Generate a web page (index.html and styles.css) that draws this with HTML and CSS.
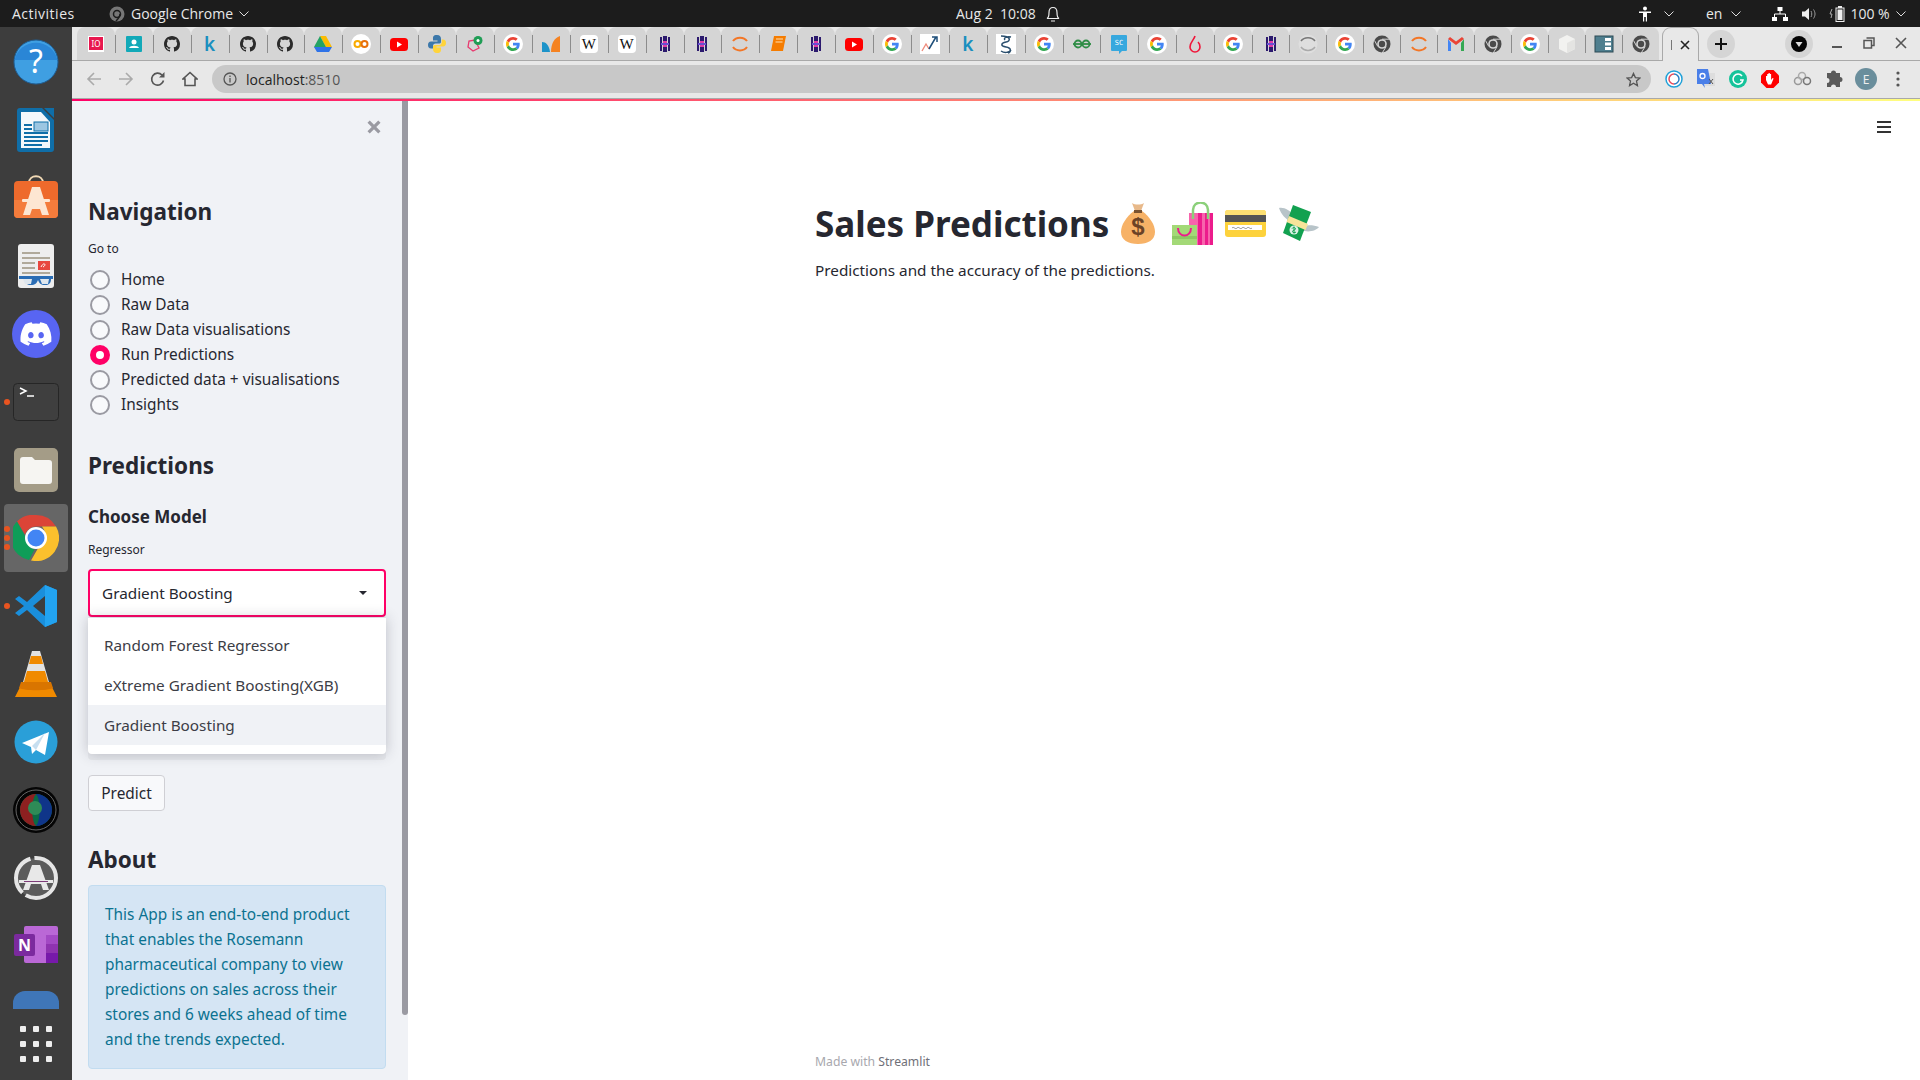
FILE: index.html
```html
<!DOCTYPE html>
<html lang="en">
<head>
    <meta charset="UTF-8">
    <title>Sales Predictions</title>
    <link rel="stylesheet" href="styles.css">
</head>
<body>
    <!-- shared favicons -->
    <svg class="defs" width="0" height="0">
        <symbol id="i-github" viewBox="0 0 20 20"><path transform="translate(2 2)" fill="#2b2b2b" d="M8 0C3.58 0 0 3.58 0 8c0 3.54 2.29 6.53 5.47 7.59.4.07.55-.17.55-.38 0-.19-.01-.82-.01-1.49-2.01.37-2.53-.49-2.69-.94-.09-.23-.48-.94-.82-1.13-.28-.15-.68-.52-.01-.53.63-.01 1.08.58 1.23.82.72 1.21 1.87.87 2.33.66.07-.52.28-.87.51-1.07-1.78-.2-3.64-.89-3.64-3.95 0-.87.31-1.59.82-2.15-.08-.2-.36-1.02.08-2.12 0 0 .67-.21 2.2.82.64-.18 1.32-.27 2-.27.68 0 1.36.09 2 .27 1.53-1.04 2.2-.82 2.2-.82.44 1.1.16 1.92.08 2.12.51.56.82 1.27.82 2.15 0 3.07-1.87 3.75-3.65 3.95.29.25.54.73.54 1.48 0 1.07-.01 1.93-.01 2.2 0 .21.15.46.55.38A8.013 8.013 0 0016 8c0-4.42-3.58-8-8-8z"/></symbol>
        <symbol id="i-google" viewBox="0 0 20 20"><circle cx="10" cy="10" r="10" fill="#fff"/><g transform="translate(3 3) scale(.292)"><path fill="#EA4335" d="M24 9.5c3.54 0 6.71 1.22 9.21 3.6l6.85-6.85C35.9 2.38 30.47 0 24 0 14.62 0 6.51 5.38 2.56 13.22l7.98 6.19C12.43 13.72 17.74 9.5 24 9.5z"/><path fill="#4285F4" d="M46.98 24.55c0-1.57-.15-3.09-.38-4.55H24v9.02h12.94c-.58 2.96-2.26 5.48-4.78 7.18l7.73 6c4.51-4.18 7.09-10.36 7.09-17.65z"/><path fill="#FBBC05" d="M10.53 28.59c-.48-1.45-.76-2.99-.76-4.59s.27-3.14.76-4.59l-7.98-6.19C.92 16.46 0 20.12 0 24c0 3.88.92 7.54 2.56 10.78l7.97-6.19z"/><path fill="#34A853" d="M24 48c6.48 0 11.93-2.13 15.89-5.81l-7.73-6c-2.15 1.45-4.92 2.3-8.16 2.3-6.26 0-11.57-4.22-13.47-9.91l-7.98 6.19C6.51 42.62 14.62 48 24 48z"/></g></symbol>
        <symbol id="i-youtube" viewBox="0 0 20 20"><rect x="1" y="4" width="18" height="13" rx="3.5" fill="#f00"/><path d="M8 7.5l5 3-5 3z" fill="#fff"/></symbol>
        <symbol id="i-hack" viewBox="0 0 20 20"><path d="M6 3v14M9 2v16M11 2v16M14 3v14" stroke="#2c1a6e" stroke-width="2" fill="none"/><rect x="8" y="7" width="4" height="6" fill="#e23aa8"/><rect x="6" y="9" width="8" height="2" fill="#6a4fd0"/></symbol>
        <symbol id="i-arcs" viewBox="0 0 20 20"><path d="M3 7c3-4.500 11-4.500 14 0" stroke="#f37626" stroke-width="2" fill="none"/><path d="M3 13c3 4.500 11 4.500 14 0" stroke="#f37626" stroke-width="2" fill="none"/></symbol>
        <symbol id="i-arcs-grey" viewBox="0 0 20 20"><circle cx="10" cy="10" r="9.500" fill="#dedede"/><path d="M3 7c3-4.500 11-4.500 14 0" stroke="#777" stroke-width="1.500" fill="none"/><path d="M3 13c3 4.500 11 4.500 14 0" stroke="#aaa" stroke-width="1.500" fill="none"/></symbol>
        <symbol id="i-chrome-grey" viewBox="0 0 20 20"><circle cx="10" cy="10" r="8.500" fill="#4a4a4a"/><circle cx="10" cy="10" r="4.800" fill="#d5d5d5"/><circle cx="10" cy="10" r="3.200" fill="#4a4a4a"/><path d="M10 5.200h7.500M5.800 12.500L2.500 6.500M14.200 12.500l-4 6.500" stroke="#d5d5d5" stroke-width="1" fill="none"/></symbol>
    </svg>

    <header class="topbar">
        <div class="top-left">
            <span class="activities">Activities</span>
            <svg class="app-dot" width="16" height="16" viewBox="0 0 16 16"><circle cx="8" cy="8" r="7.500" fill="#777"/><circle cx="8" cy="8" r="3.500" fill="none" stroke="#1c1c1c" stroke-width="1.500"/><path d="M11 8c0 3-2 5-4 7" stroke="#1c1c1c" stroke-width="1.500" fill="none"/></svg>
            <span>Google Chrome</span>
            <svg class="caret" width="10" height="6" viewBox="0 0 10 6"><path d="M.5.5L5 5 9.500.5" fill="none" stroke="#ddd"/></svg>
        </div>
        <div class="top-clock">
            <span>Aug 2&nbsp; 10:08</span>
            <svg width="14" height="16" viewBox="0 0 14 16"><path d="M1 12.500c2-1 2-3 2-6 0-3 1.500-5 4-5s4 2 4 5c0 3 0 5 2 6z" fill="none" stroke="#eee" stroke-width="1.200"/><path d="M5 15h4" stroke="#eee"/></svg>
        </div>
        <div class="top-right">
            <svg width="14" height="16" viewBox="0 0 14 16"><circle cx="7" cy="2.500" r="2" fill="#fff"/><path d="M1 5.500h12v1.500H9v8.500H7.800V11H6.200v4.500H5V7H1z" fill="#fff"/></svg>
            <svg class="caret caret-a" width="10" height="6" viewBox="0 0 10 6"><path d="M.5.5L5 5 9.500.5" fill="none" stroke="#ddd"/></svg>
            <span class="lang">en</span>
            <svg class="caret caret-b" width="10" height="6" viewBox="0 0 10 6"><path d="M.5.5L5 5 9.500.5" fill="none" stroke="#ddd"/></svg>
            <svg class="net" width="16" height="14" viewBox="0 0 16 14"><path d="M5.500 0h5v4h-5zM0 10h5v4H0zM11 10h5v4h-5z" fill="#fff"/><path d="M8 4v3M2.500 10V7h11v3" stroke="#fff" fill="none"/></svg>
            <svg class="vol" width="15" height="14" viewBox="0 0 15 14"><path d="M0 4.500h3L7 1v12l-4-3.500H0z" fill="#eee"/><path d="M9 4c1 1.500 1 4.500 0 6M11.500 2.500c2 3 2 6 0 9" stroke="#999" fill="none"/></svg>
            <svg class="batt" width="18" height="16" viewBox="0 0 18 16"><path d="M3 3L1 8h2l-1 4" stroke="#aaa" fill="none"/><rect x="7" y="2" width="8" height="13.500" fill="none" stroke="#eee"/><rect x="9" y="0" width="4" height="2" fill="#eee"/><rect x="8.500" y="3.500" width="5" height="10.500" fill="#eee"/></svg>
            <span class="pct">100 %</span>
            <svg class="caret caret-c" width="10" height="6" viewBox="0 0 10 6"><path d="M.5.5L5 5 9.500.5" fill="none" stroke="#ddd"/></svg>
        </div>
    </header>

    <div class="desktop">
        <nav class="dock">
            <div class="dock-list">
                <div class="dock-item"><svg width="46" height="46" viewBox="0 0 46 46"><circle cx="23" cy="23" r="22" fill="#3f9fe2" stroke="#1f5f96"/><path d="M1.500 21a22 22 0 0 1 43 0z" fill="#2a86d6"/><text x="23" y="34" text-anchor="middle" font-family="Noto Sans" font-size="32" fill="#fff">?</text></svg></div>
                <div class="dock-item"><svg width="38" height="46" viewBox="0 0 38 46"><path d="M3 1h22l12 12v29a3 3 0 0 1-3 3H3a3 3 0 0 1-3-3V4a3 3 0 0 1 3-3z" fill="#0f6ea8"/><path d="M4 5h20l9 10v26H4z" fill="#f4f8fb"/><path d="M27 1h10v10z" fill="#0f6ea8"/><path d="M7 17h8v2H7zM7 21h8v2H7zM7 25h24v2H7zM7 29h24v2H7zM7 33h24v2H7zM7 37h18v2H7z" fill="#0f6ea8"/><rect x="17" y="15" width="14" height="9" fill="#9cc6e2" stroke="#0f6ea8"/></svg></div>
                <div class="dock-item bag"><svg width="46" height="46" viewBox="0 0 46 46"><path d="M16 9c0-9 14-9 14 0" fill="none" stroke="#f1d9b5" stroke-width="2"/><rect x="1" y="7" width="44" height="37" rx="4" fill="#ee6a2c"/><path d="M1 26h44v14a4 4 0 0 1-4 4H5a4 4 0 0 1-4-4z" fill="#f47c3c"/><path d="M19 13h8l9 28h-7l-2-6h-8l-2 6h-7z" fill="#fde6d2"/><rect x="9" y="25" width="28" height="3" rx="1" fill="#fde6d2"/></svg></div>
                <div class="dock-item"><svg width="38" height="46" viewBox="0 0 38 46"><rect width="36" height="44" x="1" y="1" rx="3" fill="#eee"/><path d="M5 9h18v2H5zM5 14h28v2H5zM5 19h13v2H5zM5 24h13v2H5zM5 29h28v2H5z" fill="#b0a99a"/><rect x="21" y="18" width="12" height="9" fill="#e8473f"/><path d="M24 24c3-6 6-2 2 0" stroke="#fff" fill="none"/><path d="M2 33h34v3h-2c0 4-2 6-6 6s-6-2-7-5c-1 3-3 5-7 5s-6-2-6-6H2z" fill="#2a6db5"/><path d="M6 36h9l-1 5H8zM23 36h9l-1 5h-6z" fill="#dfe7ee"/></svg></div>
                <div class="dock-item"><svg width="48" height="48" viewBox="0 0 48 48"><circle cx="24" cy="24" r="24" fill="#5865f2"/><path transform="translate(8.500 8.500) scale(1.290)" fill="#fff" d="M20.317 4.37a19.791 19.791 0 0 0-4.885-1.515.074.074 0 0 0-.079.037c-.21.375-.444.864-.608 1.25a18.27 18.27 0 0 0-5.487 0 12.64 12.64 0 0 0-.617-1.25.077.077 0 0 0-.079-.037A19.736 19.736 0 0 0 3.677 4.37a.07.07 0 0 0-.032.027C.533 9.046-.32 13.58.099 18.057a.082.082 0 0 0 .031.057 19.9 19.9 0 0 0 5.993 3.03.078.078 0 0 0 .084-.028 14.09 14.09 0 0 0 1.226-1.994.076.076 0 0 0-.041-.106 13.107 13.107 0 0 1-1.872-.892.077.077 0 0 1-.008-.128 10.2 10.2 0 0 0 .372-.292.074.074 0 0 1 .077-.01c3.928 1.793 8.18 1.793 12.062 0a.074.074 0 0 1 .078.01c.12.098.246.198.373.292a.077.077 0 0 1-.006.127 12.299 12.299 0 0 1-1.873.892.077.077 0 0 0-.041.107c.36.698.772 1.362 1.225 1.993a.076.076 0 0 0 .084.028 19.839 19.839 0 0 0 6.002-3.03.077.077 0 0 0 .032-.054c.5-5.177-.838-9.674-3.549-13.66a.061.061 0 0 0-.031-.03zM8.02 15.33c-1.183 0-2.157-1.085-2.157-2.419 0-1.333.956-2.419 2.157-2.419 1.21 0 2.176 1.096 2.157 2.42 0 1.333-.956 2.418-2.157 2.418zm7.975 0c-1.183 0-2.157-1.085-2.157-2.419 0-1.333.955-2.419 2.157-2.419 1.21 0 2.176 1.096 2.157 2.42 0 1.333-.946 2.418-2.157 2.418z"/></svg></div>
                <div class="dock-item"><span class="run-dot one"></span><svg width="46" height="38" viewBox="0 0 46 38"><rect x=".5" y=".5" width="45" height="37" rx="4" fill="#3f3f3f" stroke="#262626"/><path d="M7 5l6 3-6 3M14 13h7" stroke="#fff" stroke-width="1.500" fill="none"/></svg></div>
                <div class="dock-item"><svg width="46" height="44" viewBox="0 0 46 44"><rect width="44" height="44" x="1" rx="5" fill="#a49c87"/><path d="M7 12a3 3 0 0 1 3-3h9l3 3h14a3 3 0 0 1 3 3v18a3 3 0 0 1-3 3H10a3 3 0 0 1-3-3z" fill="#f6f5f2"/></svg></div>
                <div class="dock-item active"><span class="run-dots"><i></i><i></i><i></i></span><svg width="46" height="46" viewBox="0 0 46 46"><path d="M23 0a23 23 0 0 1 20 11.500H23a11.500 11.500 0 0 0-11 8L4 6.500A23 23 0 0 1 23 0z" fill="#db4437"/><path d="M4 6.500l9.500 17a11.500 11.500 0 0 0 8 11L16 45A23 23 0 0 1 4 6.500z" fill="#0f9d58"/><path d="M43 11.500A23 23 0 0 1 18 45.500l10-17.500a11.500 11.500 0 0 0 1-16.500z" fill="#fbc02d"/><circle cx="23" cy="23" r="11" fill="#fff"/><circle cx="23" cy="23" r="8.500" fill="#4285f4"/></svg></div>
                <div class="dock-item"><span class="run-dot"></span><svg width="44" height="42" viewBox="0 0 44 42"><path d="M31 0l12 5v32l-12 5-18-17-8 6-4-3 9-7-9-7 4-3 8 6z" fill="#1a8fdc"/><path d="M31 0l12 5v32l-12 5z" fill="#22a3f0"/><path d="M31 11L19 21l12 10z" fill="#3d3d3d"/></svg></div>
                <div class="dock-item"><svg width="42" height="46" viewBox="0 0 42 46"><path d="M17 0h8l11 38H6z" fill="#e2e2e2"/><path d="M16 5h10l2 8H14zM12 20h18l3 11H9z" fill="#f08a00"/><path d="M7 32l-7 14h42l-7-14c-2 5-26 5-28 0z" fill="#f08a00"/><path d="M6 31h30l2 6c-6 3-28 3-34 0z" fill="#d97500"/></svg></div>
                <div class="dock-item"><svg width="44" height="44" viewBox="0 0 44 44"><circle cx="22" cy="22" r="21.500" fill="#2a9fd8"/><path d="M8 23l27-11-4 23-9-5-4 4-1-7z" fill="#fff"/><path d="M18 26l13-13-9 17z" fill="#c7dff0"/></svg></div>
                <div class="dock-item"><svg width="46" height="46" viewBox="0 0 46 46"><circle cx="23" cy="23" r="23" fill="#050505"/><circle cx="23" cy="23" r="20" fill="none" stroke="#666" stroke-width="1"/><circle cx="23" cy="23" r="16" fill="#0a6a46"/><path d="M23 7a16 16 0 0 0 0 32c-5-5-5-27 0-32z" fill="#8d2020"/><path d="M23 7a16 16 0 0 1 0 32c5-5 5-27 0-32z" fill="#10289a" opacity=".8"/><circle cx="22" cy="21" r="7" fill="#2e8b57"/></svg></div>
                <div class="dock-item"><svg width="46" height="46" viewBox="0 0 46 46"><circle cx="23" cy="23" r="20" fill="#5c5c5c" stroke="#e6e6e6" stroke-width="4" stroke-dasharray="42 4"/><path d="M19 10h8l9 25h-6l-2-6H18l-2 6h-6z" fill="#e8e8e8"/><rect x="6" y="25" width="34" height="3" fill="#e8e8e8"/><rect x="11" y="26" width="24" height="1" fill="#7d3c78"/></svg></div>
                <div class="dock-item"><svg width="44" height="40" viewBox="0 0 44 40"><rect x="10" y="0" width="34" height="37" rx="2" fill="#ba68d6"/><rect x="32" y="9" width="12" height="9" fill="#a349c4"/><rect x="32" y="18" width="12" height="9" fill="#8f33b0"/><rect x="32" y="27" width="12" height="10" fill="#7719aa"/><rect x="0" y="8" width="21" height="22" rx="2" fill="#7b2a9e"/><text x="10.500" y="25" text-anchor="middle" font-family="Noto Sans" font-size="16" font-weight="700" fill="#fff">N</text></svg></div>
                <div class="dock-item"><svg width="46" height="46" viewBox="0 0 46 46"><rect width="46" height="46" x="0" y="0" rx="12" fill="#3f76b8"/></svg></div>
            </div>
            <div class="apps-grid"><i></i><i></i><i></i><i></i><i></i><i></i><i></i><i></i><i></i></div>
        </nav>

        <div class="browser">
            <div class="tabstrip">
                <div class="tabs">
                    <div class="tab"><svg width="20" height="20" viewBox="0 0 20 20"><rect x="2" y="2" width="16" height="16" fill="#fff"/><rect x="3" y="3" width="14" height="13" fill="#e8174f"/><text x="10" y="13" text-anchor="middle" font-family="Noto Sans" font-size="8" fill="#fff">IO</text></svg></div>
                    <div class="tab"><svg width="20" height="20" viewBox="0 0 20 20"><rect x="2" y="2" width="16" height="16" rx="1" fill="#12a9b8"/><circle cx="10" cy="8" r="2.500" fill="#fff"/><path d="M5 14c1-3 9-3 10 0z" fill="#fff"/></svg></div>
                    <div class="tab"><svg><use href="#i-github"/></svg></div>
                    <div class="tab"><span class="tab-k">k</span></div>
                    <div class="tab"><svg><use href="#i-github"/></svg></div>
                    <div class="tab"><svg><use href="#i-github"/></svg></div>
                    <div class="tab"><svg width="20" height="20" viewBox="0 0 20 20"><path d="M7 2h6l6 11h-6z" fill="#fbbc04"/><path d="M7 2l6 11-3 5-9-5z" fill="#0f9d58" opacity=".9"/><path d="M1 13h18l-3 5H4z" fill="#2f73e8"/></svg></div>
                    <div class="tab"><svg width="20" height="20" viewBox="0 0 20 20"><circle cx="10" cy="10" r="10" fill="#fff"/><circle cx="6.500" cy="10" r="3" fill="none" stroke="#f9ab00" stroke-width="2"/><circle cx="13.500" cy="10" r="3" fill="none" stroke="#e8710a" stroke-width="2"/></svg></div>
                    <div class="tab"><svg><use href="#i-youtube"/></svg></div>
                    <div class="tab"><svg width="20" height="20" viewBox="0 0 20 20"><path d="M10 1C6 1 6 3 6 5v1.500h4.500V7.500H4C2 7.500 1 9 1 11s1 3.500 3 3.500h2V12c0-1.500 1-2.500 2.500-2.500h4C14 9.500 14 8 14 7V5c0-2-1-4-4-4z" fill="#3c78aa"/><path d="M10 19c4 0 4-2 4-4v-1.500H9.500v-1H16c2 0 3-1.500 3-3.500s-1-3.500-3-3.500h-1.200V8c0 1.500-1 3-2.500 3h-4.500C6.500 11 6 12 6 13v2c0 2 1 4 4 4z" fill="#ffd43b"/></svg></div>
                    <div class="tab"><svg width="20" height="20" viewBox="0 0 20 20"><path d="M4 7l-1 6 5 4 6-3-4-8z" fill="none" stroke="#e8396f" stroke-width="1.300"/><circle cx="13" cy="6.500" r="4.500" fill="#1f9d55"/><circle cx="13" cy="6.500" r="1.500" fill="#fff"/></svg></div>
                    <div class="tab"><svg><use href="#i-google"/></svg></div>
                    <div class="tab"><svg width="20" height="20" viewBox="0 0 20 20"><path d="M1 8c4 0 7 3 8 10H1z" fill="#1d93c9"/><path d="M10 18c0-8 3-14 9-16v16z" fill="#f58220"/></svg></div>
                    <div class="tab"><span class="tab-w">W</span></div>
                    <div class="tab"><span class="tab-w">W</span></div>
                    <div class="tab"><svg><use href="#i-hack"/></svg></div>
                    <div class="tab"><svg><use href="#i-hack"/></svg></div>
                    <div class="tab"><svg><use href="#i-arcs"/></svg></div>
                    <div class="tab"><svg width="20" height="20" viewBox="0 0 20 20"><path d="M6 2h12l-3 15H3z" fill="#f57c00"/><path d="M8 5h7M7.500 8h7" stroke="#ffe0b2"/></svg></div>
                    <div class="tab"><svg><use href="#i-hack"/></svg></div>
                    <div class="tab"><svg><use href="#i-youtube"/></svg></div>
                    <div class="tab"><svg><use href="#i-google"/></svg></div>
                    <div class="tab"><svg width="20" height="20" viewBox="0 0 20 20"><rect width="20" height="20" fill="#fff"/><path d="M2 17l4-7 3 5" fill="none" stroke="#ef8a7a" stroke-width="1.300"/><path d="M9 15l7-12M12 3h5v5" fill="none" stroke="#1f4f7a" stroke-width="1.500"/></svg></div>
                    <div class="tab"><span class="tab-k">k</span></div>
                    <div class="tab"><svg width="20" height="20" viewBox="0 0 20 20"><rect width="20" height="20" fill="#fff"/><path d="M5 2c10 0 10 5 5 6s-6 4 0 5 5 5 2 6M15 3c-4-1-8 1-6 3M5 17c3 2 8 2 10-1" fill="none" stroke="#2b4f6e" stroke-width="1.500"/></svg></div>
                    <div class="tab"><svg><use href="#i-google"/></svg></div>
                    <div class="tab"><svg width="20" height="20" viewBox="0 0 20 20"><circle cx="6" cy="10" r="3.500" fill="none" stroke="#2f8d46" stroke-width="1.800"/><circle cx="14" cy="10" r="3.500" fill="none" stroke="#2f8d46" stroke-width="1.800"/><path d="M1 10h18" stroke="#2f8d46" stroke-width="1.800"/></svg></div>
                    <div class="tab"><svg width="20" height="20" viewBox="0 0 20 20"><path d="M3 1h14a1 1 0 0 1 1 1v14a1 1 0 0 1-1 1h-4l-3 3v-3H3a1 1 0 0 1-1-1V2a1 1 0 0 1 1-1z" fill="#37a8de"/><text x="10" y="11" text-anchor="middle" font-family="DejaVu Sans Mono" font-size="7" fill="#fff">SC</text></svg></div>
                    <div class="tab"><svg><use href="#i-google"/></svg></div>
                    <div class="tab"><svg width="20" height="20" viewBox="0 0 20 20"><path d="M10 2c-1 4-5 6-5 11a5 5 0 0 0 10 0c0-2-1-4-2-5" fill="none" stroke="#f0163a" stroke-width="1.600"/></svg></div>
                    <div class="tab"><svg><use href="#i-google"/></svg></div>
                    <div class="tab"><svg><use href="#i-hack"/></svg></div>
                    <div class="tab"><svg><use href="#i-arcs-grey"/></svg></div>
                    <div class="tab"><svg><use href="#i-google"/></svg></div>
                    <div class="tab"><svg><use href="#i-chrome-grey"/></svg></div>
                    <div class="tab"><svg><use href="#i-arcs"/></svg></div>
                    <div class="tab"><svg width="20" height="20" viewBox="0 0 20 20"><path d="M2 5v12h3V9z" fill="#4285f4"/><path d="M15 9v8h3V5z" fill="#34a853"/><path d="M2 5l8 6 8-6-2-2-6 4.500L4 3z" fill="#ea4335"/></svg></div>
                    <div class="tab"><svg><use href="#i-chrome-grey"/></svg></div>
                    <div class="tab"><svg><use href="#i-google"/></svg></div>
                    <div class="tab"><svg width="20" height="20" viewBox="0 0 20 20"><path d="M10 1l8 4v10l-8 4-8-4V5z" fill="#f2f2f0"/><path d="M10 9l8-4v10l-8 4z" fill="#e4e4e2"/></svg></div>
                    <div class="tab"><svg width="20" height="20" viewBox="0 0 20 20"><rect x="1" y="2" width="18" height="16" fill="#4f7f8f" stroke="#2c4a55"/><path d="M11 4h6v3h-6zM11 8.500h6v3h-6zM11 13h6v3h-6z" fill="#fff"/></svg></div>
                    <div class="tab"><svg><use href="#i-chrome-grey"/></svg></div>
                </div>
                <div class="tab-active">
                    <span class="tab-bar"></span>
                    <svg width="10" height="10" viewBox="0 0 10 10"><path d="M1 1l8 8M9 1l-8 8" stroke="#222" stroke-width="1.600"/></svg>
                </div>
                <div class="newtab"><svg width="14" height="14" viewBox="0 0 14 14"><path d="M7 1v12M1 7h12" stroke="#111" stroke-width="2"/></svg></div>
                <div class="media-btn"><svg width="16" height="16" viewBox="0 0 16 16"><circle cx="8" cy="8" r="8" fill="#050505"/><path d="M4.500 6h7L8 11z" fill="#ddd"/></svg></div>
                <div class="win-btns">
                    <svg width="12" height="12" viewBox="0 0 12 12"><path d="M1 10h10" stroke="#555" stroke-width="2"/></svg>
                    <svg width="12" height="12" viewBox="0 0 12 12"><path d="M3.500 1h7.500v7.500H8.500M1 3.500h7.500V11H1z" fill="none" stroke="#555" stroke-width="1.500"/></svg>
                    <svg width="12" height="12" viewBox="0 0 12 12"><path d="M1 1l10 10M11 1L1 11" stroke="#555" stroke-width="1.600"/></svg>
                </div>
            </div>

            <div class="toolbar">
                <svg class="nav-btn" width="16" height="16" viewBox="0 0 16 16"><path d="M15 8H2M8 2L2 8l6 6" fill="none" stroke="#aaa" stroke-width="1.600"/></svg>
                <svg class="nav-btn" width="16" height="16" viewBox="0 0 16 16"><path d="M1 8h13M8 2l6 6-6 6" fill="none" stroke="#aaa" stroke-width="1.600"/></svg>
                <svg class="nav-btn" width="16" height="16" viewBox="0 0 16 16"><path d="M13.500 9.500A6 6 0 1 1 12 4" fill="none" stroke="#555" stroke-width="1.600"/><path d="M14.500 1v5.500H9z" fill="#555"/></svg>
                <svg class="nav-btn" width="16" height="16" viewBox="0 0 16 16"><path d="M8 1.500L1 8h2v6.500h10V8h2z" fill="none" stroke="#555" stroke-width="1.600"/></svg>
                <div class="omnibox">
                    <svg width="14" height="14" viewBox="0 0 14 14"><circle cx="7" cy="7" r="6" fill="none" stroke="#555" stroke-width="1.300"/><path d="M7 6v4.500M7 3.500v1.500" stroke="#555" stroke-width="1.300"/></svg>
                    <span class="url">localhost<span class="url-port">:8510</span></span>
                    <svg class="star" width="15" height="15" viewBox="0 0 16 16"><path d="M8 1.500l2 4.500 4.800.5-3.600 3.200 1 4.800L8 12l-4.200 2.500 1-4.800L1.200 6.500 6 6z" fill="none" stroke="#555" stroke-width="1.400"/></svg>
                </div>
                <div class="ext-icons">
                    <span class="ext"><svg width="18" height="18" viewBox="0 0 18 18"><circle cx="9" cy="9" r="8" fill="#fff" stroke="#1fa0d8" stroke-width="1.500"/><path d="M9 4a5 5 0 0 1 0 10" fill="none" stroke="#2d7fc4" stroke-width="1.500"/><path d="M9 14A5 5 0 0 1 9 4" fill="none" stroke="#e94b5b" stroke-width="1.500"/></svg></span>
                    <span class="ext"><svg width="18" height="20" viewBox="0 0 18 20"><rect x="7" y="4" width="11" height="13" fill="#ddd"/><path d="M0 0h11l3 15H7l1 4-3-4H0z" fill="#4a7fe8"/><circle cx="5.500" cy="7" r="2.500" fill="none" stroke="#fff" stroke-width="1.300"/><path d="M12 10l4 5M16 10l-4 5" stroke="#555"/></svg></span>
                    <span class="ext"><svg width="18" height="18" viewBox="0 0 18 18"><circle cx="9" cy="9" r="9" fill="#15c39a"/><path d="M13 6A5 5 0 1 0 14 10h-3" fill="none" stroke="#fff" stroke-width="1.500"/></svg></span>
                    <span class="ext"><svg width="18" height="18" viewBox="0 0 18 18"><path d="M5.500 0h7L18 5.500v7L12.500 18h-7L0 12.500v-7z" fill="#f00"/><path d="M5 10V6h1.200v3V4h1.300v5V3h1.300v6V4h1.300v6l1.500-2 1 .5-2.500 6H7z" fill="#fff"/></svg></span>
                    <span class="ext"><svg width="20" height="18" viewBox="0 0 20 18"><circle cx="6" cy="11" r="3.500" fill="none" stroke="#999" stroke-width="1.500"/><circle cx="10" cy="6" r="3.500" fill="none" stroke="#aaa" stroke-width="1.500"/><circle cx="15" cy="11" r="3.500" fill="none" stroke="#777" stroke-width="1.500"/></svg></span>
                    <span class="ext"><svg width="18" height="18" viewBox="0 0 18 18"><path d="M6 3a2.500 2.500 0 0 1 5 0h4v4a2.500 2.500 0 0 1 0 5v5h-4a2.500 2.500 0 0 0-5 0H2v-4a2.500 2.500 0 0 0 0-5V3z" fill="#5a5a5a"/></svg></span>
                    <span class="ext avatar">E</span>
                    <span class="ext"><svg width="4" height="16" viewBox="0 0 4 16"><circle cx="2" cy="2" r="1.600" fill="#555"/><circle cx="2" cy="8" r="1.600" fill="#555"/><circle cx="2" cy="14" r="1.600" fill="#555"/></svg></span>
                </div>
            </div>
            <div class="decoration"></div>

            <div class="app">
                <aside class="sidebar">
                    <span class="side-close"><svg width="14" height="14" viewBox="0 0 13 13"><path d="M1.500 1.500l10 10M11.500 1.500l-10 10" stroke="#9a9aa2" stroke-width="3"/></svg></span>
                    <span class="side-scroll"></span>

                    <h2 class="side-title">Navigation</h2>
                    <div class="field-label goto">Go to</div>
                    <div class="radio-group">
                        <div class="radio"><span class="radio-dot"></span>Home</div>
                        <div class="radio"><span class="radio-dot"></span>Raw Data</div>
                        <div class="radio"><span class="radio-dot"></span>Raw Data visualisations</div>
                        <div class="radio"><span class="radio-dot checked"></span>Run Predictions</div>
                        <div class="radio"><span class="radio-dot"></span>Predicted data + visualisations</div>
                        <div class="radio"><span class="radio-dot"></span>Insights</div>
                    </div>

                    <h2 class="side-title predictions">Predictions</h2>
                    <h3 class="side-sub">Choose Model</h3>
                    <div class="field-label regressor">Regressor</div>
                    <div class="select-wrap">
                        <div class="select">
                            <span>Gradient Boosting</span>
                            <span class="select-arrow"></span>
                        </div>
                        <ul class="menu">
                            <li>Random Forest Regressor</li>
                            <li>eXtreme Gradient Boosting(XGB)</li>
                            <li class="hover">Gradient Boosting</li>
                        </ul>
                    </div>
                    <button class="predict-btn">Predict</button>

                    <h2 class="side-title about">About</h2>
                    <div class="info-box">This App is an end-to-end product<br>that enables the Rosemann<br>pharmaceutical company to view<br>predictions on sales across their<br>stores and 6 weeks ahead of time<br>and the trends expected.</div>
                </aside>

                <main class="main">
                    <span class="hamburger"><i></i><i></i><i></i></span>
                    <div class="block">
                        <h1 class="page-title">
                            <span>Sales Predictions</span>
                            <svg class="emoji" width="34" height="42" viewBox="0 0 34 42"><path d="M11 1c3 2 9 2 12 0l-3 8h-6z" fill="#e8b98a"/><path d="M13 9h8c8 6 13 14 13 21 0 8-7 12-17 12S0 38 0 30C0 23 5 15 13 9z" fill="#f7b267"/><rect x="13" y="8" width="8" height="3" fill="#7a5230"/><text x="17" y="33" text-anchor="middle" font-family="Liberation Sans" font-size="24" fill="#6b4226">$</text></svg>
                            <svg class="emoji emoji-bags" width="41" height="43" viewBox="0 0 41 43"><rect x="17" y="11" width="24" height="32" fill="#f764ac"/><path d="M26 11h15v32H26z" fill="#ec1c8c"/><path d="M30 11h3v32h-3zM36 11h2v32h-2z" fill="#f764ac"/><path d="M21 17V8c0-10 15-10 15 0v9" fill="none" stroke="#8bd07a" stroke-width="2.500"/><rect x="0" y="23" width="25" height="20" fill="#a3d977"/><path d="M0 34h25v3H0z" fill="#8cc863"/><path d="M6 26c0 10 13 10 13 0" fill="none" stroke="#ec1c8c" stroke-width="2"/></svg>
                            <svg class="emoji" width="41" height="27" viewBox="0 0 41 27"><rect width="41" height="27" rx="3" fill="#fdd23c"/><path d="M0 3a3 3 0 0 1 3-3h35a3 3 0 0 1 3 3v2H0z" fill="#fde073"/><rect y="5" width="41" height="7" fill="#555"/><rect x="3" y="15" width="34" height="5" fill="#fff"/><path d="M7 18c2-2 3 2 5 0s3 2 5 0 3 2 5 0 3 2 5 0" fill="none" stroke="#777" stroke-width=".8"/></svg>
                            <svg class="emoji" width="41" height="37" viewBox="0 0 41 37"><path d="M1 3c5-1 11 2 15 8l-3 5C8 15 3 9 1 3zM24 21c6-1 12-1 17 1-3 4-11 6-18 3z" fill="#b8c4c9"/><path d="M15 0l18 7-11 29L5 28z" fill="#12a150"/><path d="M11 11l19 8-2.500 6-19-8z" fill="#f6e49a"/><circle cx="16" cy="25" r="4.500" fill="#fff" opacity=".85"/><path d="M16 21.500v7M14 23.500c1-1.500 4-1 3.500.5s-3 1-3 2.500 2.500 1.500 3.500.5" fill="none" stroke="#12a150"/></svg>
                        </h1>
                        <p class="page-sub">Predictions and the accuracy of the predictions.</p>
                    </div>
                    <footer class="footer"><div class="footer-in">Made with <span class="footer-brand">Streamlit</span></div></footer>
                </main>
            </div>
        </div>
    </div>
</body>
</html>
```

FILE: styles.css
```css
* {
    box-sizing: border-box;
}
body {
    margin: 0;
    width: 1920px;
    height: 1080px;
    overflow: hidden;
    font-family: "Noto Sans", sans-serif;
    color: #262730;
    background-color: #fff;
}
.defs {
    position: absolute;
}

/* gnome top bar */
.topbar {
    height: 27px;
    display: flex;
    align-items: center;
    background-color: #1c1c1c;
    color: #e8e8e8;
    font-family: "Open Sans", sans-serif;
    font-size: 14px;
}
.top-left {
    width: 956px;
    display: flex;
    align-items: center;
    padding-left: 12px;
}
.activities {
    width: 97px;
    letter-spacing: 0.5px;
}
.app-dot {
    margin-right: 6px;
}
.top-left .caret {
    margin-left: 6px;
}
.top-clock {
    width: 620px;
    display: flex;
    align-items: center;
    gap: 10px;
}
.top-right {
    flex: 1;
    display: flex;
    align-items: center;
    padding-left: 62px;
}
.caret-a {
    margin-left: 12px;
}
.lang {
    margin-left: 32px;
}
.caret-b {
    margin-left: 9px;
}
.net {
    margin-left: 31px;
}
.vol {
    margin-left: 14px;
}
.batt {
    margin-left: 12px;
}
.pct {
    margin-left: 3px;
}
.caret-c {
    margin-left: 6px;
}

/* dock */
.desktop {
    display: flex;
    height: 1053px;
}
.dock {
    width: 72px;
    background-color: #3d3d3d;
    display: flex;
    flex-direction: column;
    padding-top: 1px;
}
.dock-list {
    height: 981px;
    overflow: hidden;
}
.dock-item {
    position: relative;
    height: 68px;
    display: flex;
    align-items: center;
    justify-content: center;
}
.dock-item.bag {
    padding-bottom: 2px;
}
.dock-item.active {
    background-color: #666;
    border-radius: 4px;
    margin: 0 4px;
}
.run-dot {
    position: absolute;
    left: 4px;
    top: 31px;
    width: 6px;
    height: 6px;
    border-radius: 50%;
    background-color: #e95420;
}
.run-dots {
    position: absolute;
    left: 0;
    top: 22px;
    display: flex;
    flex-direction: column;
    gap: 3px;
}
.run-dots i {
    width: 6px;
    height: 6px;
    border-radius: 50%;
    background-color: #e95420;
}
.apps-grid {
    margin: 17px auto 0;
    display: grid;
    grid-template-columns: repeat(3, 6px);
    column-gap: 7px;
    row-gap: 9px;
}
.apps-grid i {
    width: 6px;
    height: 6px;
    border-radius: 1px;
    background-color: #eee;
}

/* chrome */
.browser {
    flex: 1;
    display: flex;
    flex-direction: column;
    min-width: 0;
}
.tabstrip {
    height: 34px;
    display: flex;
    background-color: #e8e8e8;
    border-bottom: 1px solid #a9a9a9;
    padding-left: 5px;
}
.tabs {
    width: 1582px;
    display: flex;
    margin-right: 3px;
}
.tab {
    flex: 1;
    height: 33px;
    display: flex;
    align-items: center;
    justify-content: center;
    background-color: #d5d5d5;
    border-radius: 8px 8px 0 0;
    position: relative;
}
/* the tabs right of the 31st came out a pixel narrower */
.tab:nth-child(n+32) {
    flex: 0 0 37px;
}
.tab svg {
    width: 20px;
    height: 20px;
}
.tab-k {
    font-size: 19px;
    line-height: 20px;
    font-weight: 600;
    color: #1a8fbf;
}
.tab-w {
    width: 18px;
    height: 18px;
    border-radius: 4px;
    background-color: #fff;
    font-family: "Liberation Serif", serif;
    font-size: 15px;
    line-height: 18px;
    text-align: center;
    color: #111;
}
.tab + .tab::before {
    content: "";
    position: absolute;
    left: 0;
    top: 8px;
    height: 18px;
    width: 1px;
    background-color: #8c8c8c;
}
.tab-active {
    width: 37px;
    height: 34px;
    background-color: #e8e8e8;
    border: 1px solid #a9a9a9;
    border-bottom: none;
    border-radius: 9px 9px 0 0;
    display: flex;
    align-items: center;
    padding-left: 8px;
    gap: 8px;
}
.tab-bar {
    width: 1px;
    height: 10px;
    background-color: #777;
}
.newtab {
    width: 28px;
    height: 28px;
    margin: 3px 0 0 8px;
    border-radius: 50%;
    background-color: #d5d5d5;
    display: flex;
    align-items: center;
    justify-content: center;
}
.media-btn {
    width: 28px;
    height: 28px;
    margin: 3px 0 0 50px;
    border-radius: 50%;
    background-color: #d5d5d5;
    display: flex;
    align-items: center;
    justify-content: center;
}
.win-btns {
    display: flex;
    align-items: center;
    gap: 20px;
    margin-left: 18px;
    height: 32px;
}
.toolbar {
    height: 37px;
    display: flex;
    align-items: center;
    background-color: #e8e8e8;
    padding: 0 0 1px 14px;
}
.nav-btn {
    margin-right: 16px;
}
.nav-btn:nth-of-type(4) {
    margin-right: 14px;
}
.omnibox {
    width: 1439px;
    height: 28px;
    border-radius: 14px;
    background-color: #c8c8c8;
    display: flex;
    align-items: center;
    padding: 0 10px 0 11px;
    font-family: "Open Sans", sans-serif;
    font-size: 14px;
    color: #222;
}
.url {
    margin-left: 9px;
}
.url-port {
    color: #555;
}
.star {
    margin-left: auto;
}
.ext-icons {
    display: flex;
    margin-left: 7px;
}
.ext {
    width: 32px;
    height: 24px;
    display: flex;
    align-items: center;
    justify-content: center;
}
.avatar {
    width: 22px;
    height: 22px;
    margin: 1px 5px;
    border-radius: 50%;
    background-color: #6a8e9c;
    color: #eee;
    font-size: 12px;
}
.decoration {
    height: 3px;
    border-top: 1px solid #a9a9a9;
    background: linear-gradient(90deg, #ff0066, #ffff80);
}

/* streamlit app */
.app {
    flex: 1;
    display: flex;
    min-height: 0;
}
.sidebar {
    position: relative;
    width: 336px;
    padding: 96px 22px 0 16px;
    background-color: #f0f2f6;
    overflow: hidden;
}
.side-close {
    position: absolute;
    left: 295px;
    top: 19px;
    line-height: 0;
}
.side-scroll {
    position: absolute;
    right: 0;
    top: 0;
    width: 6px;
    height: 914px;
    border-radius: 0 0 3px 3px;
    background-color: #9a9aa2;
}
.side-title {
    margin: 0;
    font-size: 22.5px;
    line-height: 30px;
    font-weight: 700;
}
.predictions {
    margin-top: 34px;
}
.about {
    margin-top: 34px;
}
.side-sub {
    margin: 24px 0 0;
    font-size: 17px;
    line-height: 24px;
    font-weight: 700;
}
.field-label {
    font-size: 12px;
    line-height: 16px;
}
.goto {
    margin-top: 14px;
}
.regressor {
    margin-top: 13px;
}
.radio-group {
    margin-top: 10px;
}
.radio {
    height: 25px;
    display: flex;
    align-items: center;
    font-size: 15.4px;
}
.radio-dot {
    width: 20px;
    height: 20px;
    margin: 0 11px 0 2px;
    border: 2px solid #9a9aa2;
    border-radius: 50%;
    background-color: #f8f9fb;
}
.radio-dot.checked {
    border: 6.5px solid #ff0066;
    background-color: #fff;
}
.select-wrap {
    position: relative;
    margin: 11px 0 158px;
}
.select {
    height: 48px;
    display: flex;
    align-items: center;
    justify-content: space-between;
    padding: 0 17px 0 12px;
    background-color: #fff;
    border: 2px solid #ff0066;
    border-radius: 4px;
    font-size: 15.3px;
}
.select-arrow {
    width: 0;
    height: 0;
    border: 4px solid transparent;
    border-top: 4px solid #262730;
    border-bottom: none;
}
.menu {
    position: absolute;
    left: 0;
    right: 0;
    top: 49px;
    margin: 0;
    padding: 7px 0 9px;
    list-style: none;
    background-color: #fff;
    border-radius: 0 0 4px 4px;
    box-shadow: 0 0 14px rgba(40, 40, 60, 0.25), 0 6px 0 #e6e8ec;
    font-size: 15.3px;
    color: #3c3d46;
}
.menu li {
    height: 40px;
    line-height: 40px;
    padding-left: 16px;
}
.menu li.hover {
    background-color: #f0f2f6;
}
.predict-btn {
    display: block;
    width: 77px;
    height: 36px;
    padding: 0;
    font-family: inherit;
    font-size: 15.4px;
    color: #262730;
    background-color: #f8f9fb;
    border: 1px solid #cfcfd4;
    border-radius: 4px;
}
.info-box {
    height: 184px;
    margin-top: 10px;
    padding: 16px 0 0 16px;
    background-color: #d5e5f4;
    border: 1px solid #c2dcf0;
    border-radius: 4px;
    color: #0b7290;
    font-size: 15.4px;
    line-height: 25px;
    white-space: nowrap;
}
.main {
    flex: 1;
    position: relative;
    display: flex;
    flex-direction: column;
    background-color: #fff;
}
.hamburger {
    position: absolute;
    left: 1469px;
    top: 20px;
    display: flex;
    flex-direction: column;
    gap: 3px;
}
.hamburger i {
    width: 14px;
    height: 2px;
    background-color: #333;
}
.block {
    width: 730px;
    margin: 0 auto;
    padding: 95px 16px 0;
}
.page-title {
    height: 54px;
    margin: 0;
    display: flex;
    align-items: center;
    font-size: 35px;
    font-weight: 700;
    white-space: nowrap;
}
.emoji {
    flex: none;
    margin-left: 12px;
}
.emoji-bags {
    margin-left: 17px;
}
.page-sub {
    margin: 8px 0 0;
    font-size: 15.3px;
    line-height: 24px;
}
.footer {
    margin-top: auto;
}
.footer-in {
    width: 730px;
    margin: 0 auto;
    padding: 0 16px 10px;
    font-size: 12.2px;
    color: #a8a8ae;
}
.footer-brand {
    color: #6f7078;
}
```
